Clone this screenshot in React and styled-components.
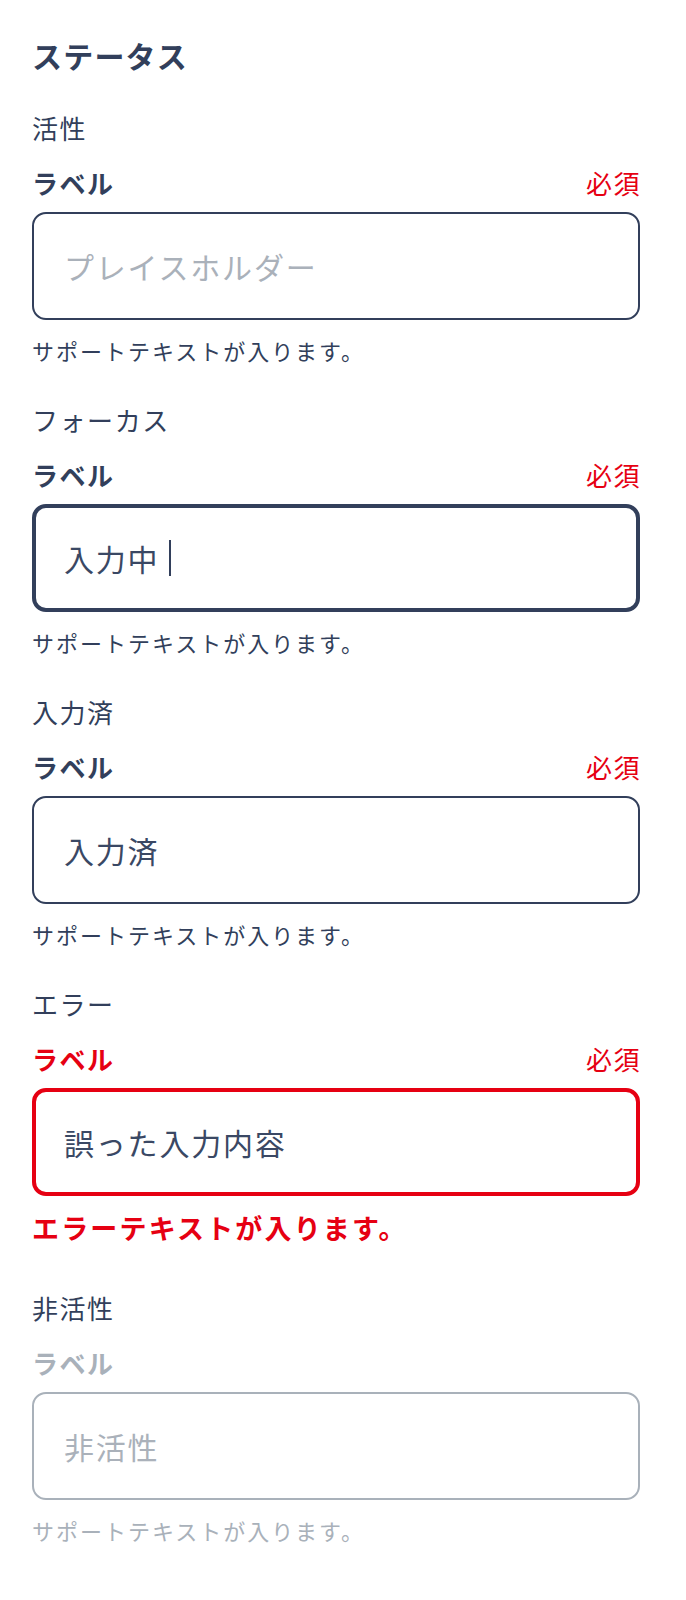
import React from "react";
import styled, { createGlobalStyle } from "styled-components";

const navy = "#323f5b";
const red = "#e60012";
const grey = "#a9b1ba";

const GlobalStyle = createGlobalStyle`
  html, body {
    margin: 0;
    padding: 0;
    background: #ffffff;
  }
  body {
    font-family: "Noto Sans CJK JP", "Noto Sans", sans-serif;
    color: ${navy};
  }
`;

const Page = styled.div`
  width: 686px;
  box-sizing: border-box;
  padding: 35px 46px 20px 32px;
  display: flex;
  flex-direction: column;
`;

const Title = styled.h2`
  margin: 0 0 35px;
  font-size: 30px;
  line-height: 40px;
  font-weight: 700;
  letter-spacing: 0.04em;
  color: ${navy};
`;

const Section = styled.div`
  display: flex;
  flex-direction: column;
  &:not(:last-child) {
    margin-bottom: 36px;
  }
`;

const StateName = styled.div`
  font-size: 26px;
  line-height: 36px;
  letter-spacing: 0.06em;
  color: ${navy};
  margin-bottom: 19px;
`;

const LabelRow = styled.div`
  display: flex;
  justify-content: space-between;
  align-items: center;
  height: 36px;
  margin-bottom: 11px;
`;

const Label = styled.span`
  font-size: 26px;
  line-height: 36px;
  font-weight: 700;
  letter-spacing: 0.06em;
  color: ${(p) => (p.$state === "error" ? red : p.$state === "disabled" ? grey : navy)};
`;

const Required = styled.span`
  font-size: 26px;
  line-height: 36px;
  letter-spacing: 0.06em;
  margin-right: -1px;
  color: ${red};
`;

const Field = styled.div`
  box-sizing: border-box;
  height: 108px;
  display: flex;
  align-items: center;
  border-radius: 14px;
  border: ${(p) => (p.$thick ? 4 : 2)}px solid
    ${(p) => (p.$state === "error" ? red : p.$state === "disabled" ? grey : navy)};
  padding: 0 ${(p) => (p.$thick ? 28 : 30)}px;
  background: #ffffff;
`;

const FieldText = styled.span`
  font-size: 30px;
  line-height: 40px;
  letter-spacing: 0.06em;
  color: ${(p) => (p.$muted ? "#aab1ba" : "#3a4864")};
`;

const Caret = styled.span`
  display: inline-block;
  width: 2px;
  height: 36px;
  margin-left: 10px;
  background: ${navy};
`;

const Support = styled.div`
  margin-top: 14px;
  font-size: 22px;
  line-height: 32px;
  letter-spacing: 0.09em;
  color: ${(p) => (p.$disabled ? grey : navy)};
`;

const ErrorText = styled.div`
  margin-top: 10px;
  margin-bottom: 4px;
  font-size: 27px;
  line-height: 44px;
  font-weight: 700;
  letter-spacing: 0.08em;
  color: ${red};
`;

const states = [
  { name: "活性", state: "default", text: "プレイスホルダー", muted: true },
  { name: "フォーカス", state: "focus", text: "入力中", caret: true },
  { name: "入力済", state: "default", text: "入力済" },
  { name: "エラー", state: "error", text: "誤った入力内容" },
  { name: "非活性", state: "disabled", text: "非活性", muted: true },
];

function InputBlock({ item }) {
  const thick = item.state === "focus" || item.state === "error";
  return (
    <Section>
      <StateName>{item.name}</StateName>
      <LabelRow>
        <Label $state={item.state}>ラベル</Label>
        {item.state !== "disabled" && <Required>必須</Required>}
      </LabelRow>
      <Field $state={item.state} $thick={thick}>
        <FieldText $muted={item.muted}>{item.text}</FieldText>
        {item.caret && <Caret />}
      </Field>
      {item.state === "error" ? (
        <ErrorText>エラーテキストが入ります。</ErrorText>
      ) : (
        <Support $disabled={item.state === "disabled"}>サポートテキストが入ります。</Support>
      )}
    </Section>
  );
}

export default function App() {
  return (
    <>
      <GlobalStyle />
      <Page>
        <Title>ステータス</Title>
        {states.map((item) => (
          <InputBlock key={item.name} item={item} />
        ))}
      </Page>
    </>
  );
}
